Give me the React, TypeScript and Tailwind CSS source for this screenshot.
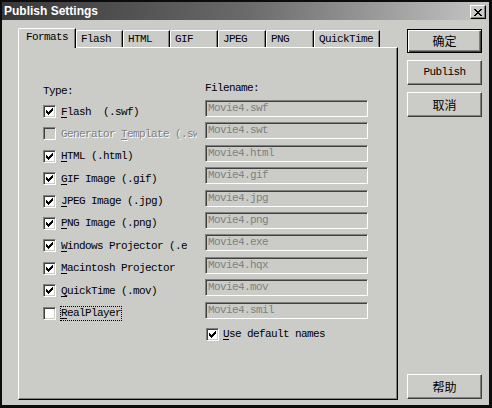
import React from "react";

const mono = "font-['Liberation_Mono',monospace] text-[11px] tracking-[-0.6px]";

function U({ children }: { children: React.ReactNode }) {
  return <span className="underline underline-offset-[2px] decoration-1">{children}</span>;
}

function CheckMark() {
  const px: [number, number][] = [
    [6, 0],
    [5, 1], [6, 1],
    [0, 2], [4, 2], [5, 2], [6, 2],
    [0, 3], [1, 3], [3, 3], [4, 3], [5, 3],
    [0, 4], [1, 4], [2, 4], [3, 4], [4, 4],
    [1, 5], [2, 5], [3, 5],
    [2, 6],
  ];
  return (
    <svg className="absolute left-[2px] top-[2px]" width="7" height="7" viewBox="0 0 7 7" shapeRendering="crispEdges">
      {px.map(([x, y], i) => (
        <rect key={i} x={x} y={y} width="1" height="1" fill="#000" />
      ))}
    </svg>
  );
}

function Check({ checked, disabled }: { checked: boolean; disabled?: boolean }) {
  return (
    <div
      className={`relative w-[13px] h-[13px] shrink-0 border border-t-[#808080] border-l-[#808080] border-b-white border-r-white shadow-[inset_1px_1px_0_#404040,inset_-1px_-1px_0_#cbccc8] ${
        disabled ? "bg-[#cbccc8]" : "bg-white"
      }`}
    >
      {checked && <CheckMark />}
    </div>
  );
}

function CloseX() {
  const rows = ["##....##", ".##..##.", "..####..", "...##...", "..####..", ".##..##.", "##....##"];
  return (
    <svg width="8" height="7" viewBox="0 0 8 7" shapeRendering="crispEdges">
      {rows.flatMap((r, y) =>
        r.split("").map((c, x) => (c === "#" ? <rect key={`${x}-${y}`} x={x} y={y} width="1" height="1" fill="#000" /> : null))
      )}
    </svg>
  );
}

function Btn({ children, def, cjk, className = "" }: { children: React.ReactNode; def?: boolean; cjk?: boolean; className?: string }) {
  const font = cjk ? "font-['Noto_Sans_CJK_SC',sans-serif] text-[12px]" : mono;
  const frame = def
    ? "border border-black shadow-[inset_1px_1px_0_#ffffff,inset_-1px_-1px_0_#404040,inset_-2px_-2px_0_#808080]"
    : "border border-t-white border-l-white border-r-[#404040] border-b-[#404040] shadow-[inset_-1px_-1px_0_#808080]";
  return (
    <div className={`w-[75px] flex items-center justify-center bg-[#cbccc8] text-black ${frame} ${font} ${className}`}>{children}</div>
  );
}

type Row = {
  label: React.ReactNode;
  file: string;
  checked: boolean;
  disabled?: boolean;
  clip?: string;
  focus?: boolean;
};

const rows: Row[] = [
  { label: <><U>F</U>lash  (.swf)</>, file: "Movie4.swf", checked: true },
  { label: <>Generator <U>T</U>emplate (.swf)</>, file: "Movie4.swt", checked: false, disabled: true, clip: "w-[136px]" },
  { label: <><U>H</U>TML (.html)</>, file: "Movie4.html", checked: true },
  { label: <><U>G</U>IF Image (.gif)</>, file: "Movie4.gif", checked: true },
  { label: <><U>J</U>PEG Image (.jpg)</>, file: "Movie4.jpg", checked: true },
  { label: <><U>P</U>NG Image (.png)</>, file: "Movie4.png", checked: true },
  { label: <><U>W</U>indows Projector (.exe)</>, file: "Movie4.exe", checked: true, clip: "w-[126px]" },
  { label: <><U>M</U>acintosh Projector</>, file: "Movie4.hqx", checked: true },
  { label: <><U>Q</U>uickTime (.mov)</>, file: "Movie4.mov", checked: true },
  { label: <><U>R</U>ealPlayer</>, file: "Movie4.smil", checked: false, focus: true },
];

const tabs = [
  { name: "Flash", w: "w-[47px]" },
  { name: "HTML", w: "w-[47px]" },
  { name: "GIF", w: "w-[48px]" },
  { name: "JPEG", w: "w-[48px]" },
  { name: "PNG", w: "w-[48px]" },
  { name: "QuickTime", w: "w-[66px]" },
];

export default function App() {
  return (
    <div className="w-[492px] h-[408px] border-l-2 border-t-2 border-r-[3px] border-b-[3px] border-[#0c0c0c] bg-[#cbccc8] flex flex-col">
      {/* Title bar */}
      <div className="h-[18px] shrink-0 flex items-start justify-between bg-linear-to-r from-[#383838] via-[#6a6a6a] to-[#c6c6c6] pl-[2px] pr-[3px]">
        <span className="font-['Liberation_Sans',Arial,sans-serif] font-bold text-[12px] leading-[18px] text-white">Publish Settings</span>
        <div className="mt-[3px] w-[16px] h-[14px] flex items-center justify-center bg-[#cbccc8] border border-t-white border-l-white border-r-black border-b-black shadow-[inset_-1px_-1px_0_#808080]">
          <CloseX />
        </div>
      </div>

      {/* Body */}
      <div className="flex flex-1 pt-[8px] pl-[16px]">
        <div className="w-[380px] flex flex-col">
          {/* Tabs */}
          <div className={`flex items-end h-[19px] ${mono} text-black`}>
            <div className="relative z-10 -mb-px h-[20px] w-[58px] bg-[#cbccc8] border-l border-t border-white border-r border-r-black rounded-tl-[2px] shadow-[inset_-1px_0_0_#808080] pl-[7px] leading-[16px]">
              Formats
            </div>
            {tabs.map((t) => (
              <div
                key={t.name}
                className={`h-[17px] ${t.w} bg-[#cbccc8] border-l border-t border-white border-r border-r-black rounded-tl-[2px] shadow-[inset_-1px_0_0_#808080] pl-[4px] leading-[16px]`}
              >
                {t.name}
              </div>
            ))}
          </div>

          {/* Panel */}
          <div className={`w-[380px] h-[353px] border border-t-white border-l-white border-r-black border-b-black shadow-[inset_-1px_-1px_0_#808080] pt-[32px] pl-[24px] ${mono} text-black`}>
            <div className="flex h-[19px]">
              <div className="w-[162px] pt-[4px] leading-[14px]">Type:</div>
              <div className="pt-[1px] leading-[14px]">Filename:</div>
            </div>
            {rows.map((r, i) => (
              <div key={i} className="flex h-[22.4px]">
                <div className="w-[162px] flex items-center h-[13px] mt-[6px]">
                  <Check checked={r.checked} disabled={r.disabled} />
                  <div
                    className={`${r.focus ? "ml-[4px] border border-dotted border-black h-[15px] leading-[13px]" : "ml-[5px] leading-[14px]"} ${
                      r.clip ?? ""
                    } overflow-hidden whitespace-pre ${r.disabled ? "text-[#808080] [text-shadow:1px_1px_0_#ffffff]" : ""}`}
                  >
                    {r.label}
                  </div>
                </div>
                <div className="mt-[1px] w-[163px] h-[17px] border border-t-[#808080] border-l-[#808080] border-b-white border-r-white shadow-[inset_1px_1px_0_#404040] pl-[2px] leading-[15px] text-[#808080] whitespace-pre">
                  {r.file}
                </div>
              </div>
            ))}
            <div className="flex mt-[5px] items-center h-[13px]">
              <div className="w-[163px]" />
              <Check checked />
              <div className="ml-[4px] leading-[14px]">
                <U>U</U>se default names
              </div>
            </div>
          </div>
        </div>

        {/* Buttons */}
        <div className="ml-[9px] w-[75px] pt-[1px] pb-[6px] flex flex-col">
          <Btn def cjk className="h-[24px]">确定</Btn>
          <Btn className="h-[25px] mt-[7px]">Publish</Btn>
          <Btn cjk className="h-[25px] mt-[7px]">取消</Btn>
          <Btn cjk className="h-[25px] mt-auto">帮助</Btn>
        </div>
      </div>
    </div>
  );
}
